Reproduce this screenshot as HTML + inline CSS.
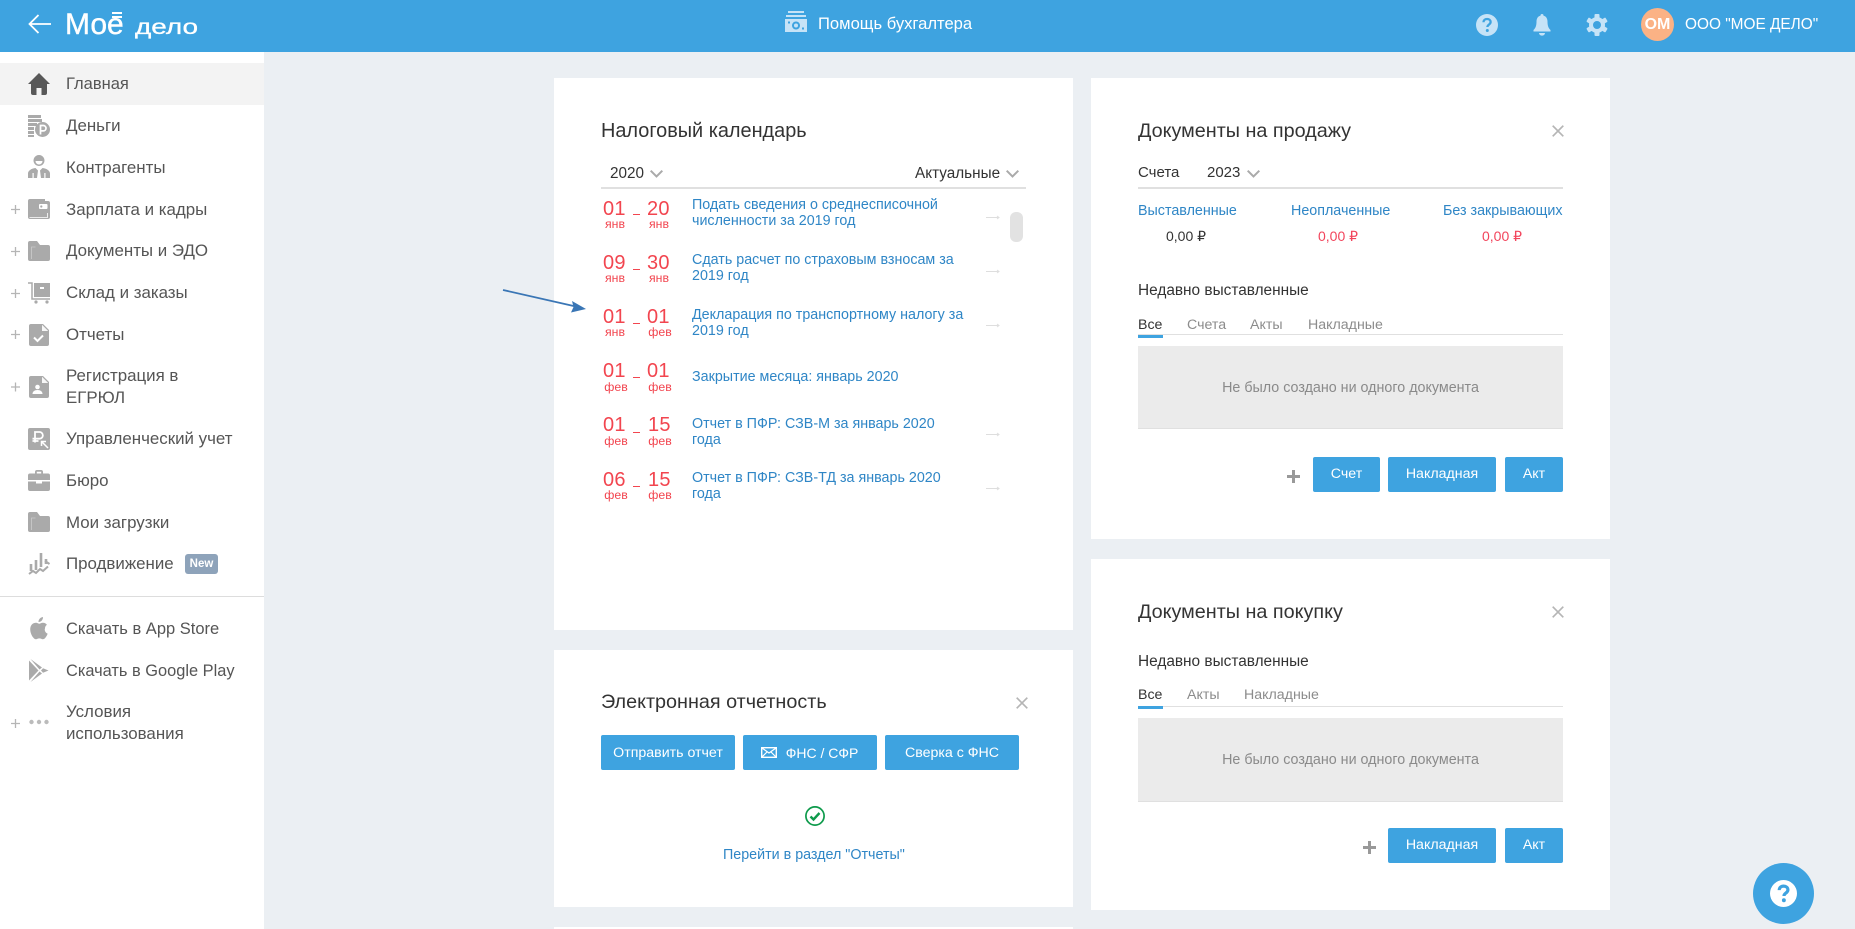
<!DOCTYPE html>
<html lang="ru"><head><meta charset="utf-8"><title>Моё дело</title>
<style>
html,body{margin:0;padding:0;width:1855px;height:929px;overflow:hidden;background:#ebeff3;font-family:"Liberation Sans",Arial,sans-serif}
.a{position:absolute}
.t{position:absolute;white-space:nowrap;line-height:20px;height:20px}
.card{position:absolute;background:#fff}
.nav{font-size:16.900px;color:#555;left:66px}
.h{font-size:19.800px;color:#333}
.d{font-size:20px;color:#f2454f;letter-spacing:.2px}
.m{font-size:12.300px;color:#f2454f;text-align:center;width:26px}
.l{font-size:14.300px;color:#2f86c6;line-height:16px;height:auto}
.btn{position:absolute;background:#3ea3e0;border-radius:2px;height:35px;line-height:35px;color:#fff;font-size:14.200px;text-align:center;white-space:nowrap}
.s14{font-size:15px;color:#333}
.lnk{font-size:14.300px;color:#2f86c6}
.red{font-size:14px;color:#f2455c}
.tab{font-size:14.200px;color:#8c8c8c}
.box{position:absolute;background:#ebebeb;border-bottom:1px solid #e0e0e0;left:1138px;width:425px;color:#8a8a8a;font-size:14.300px;text-align:center}
.line{position:absolute;background:#e0e0e0;height:2px}
.ul{position:absolute;background:#3ea3e0;height:3px;left:1138px;width:25px}
svg{position:absolute;display:block;overflow:visible}
</style></head><body>

<!-- header -->
<div class="a" style="left:0;top:0;width:1855px;height:52px;background:#3ea3e0"></div>
<svg style="left:28px;top:13px" width="23" height="22" viewBox="0 0 23 22" fill="none" stroke="#fff" stroke-width="1.800"><path d="M1.500 11H23M10.500 2L1.500 11l9 9"/></svg>
<div class="t" style="left:65px;top:9px;font-size:30px;line-height:32px;height:32px;color:#fff;-webkit-text-stroke:.4px #fff">Мое</div>
<div class="a" style="left:112px;top:12px;width:10px;height:2px;background:#fff"></div>
<div class="a" style="left:112px;top:16px;width:10px;height:2px;background:#fff"></div>
<div class="t" style="left:135px;top:16px;font-size:21px;line-height:24px;height:24px;color:#fff;-webkit-text-stroke:.3px #fff;transform:scaleX(1.330);transform-origin:left">дело</div>

<svg style="left:785px;top:11px" width="22" height="22" viewBox="0 0 22 22"><rect x="3" y="0" width="16" height="2" fill="#c6e3f7"/><rect x="1" y="4" width="20" height="2" fill="#c6e3f7"/><path fill="#c6e3f7" fill-rule="evenodd" d="M0 8h22v13H0zM11 10.500a4 4 0 1 0 .01 0zM3 10.500h2v2H3zM17 16.500h2v2h-2z"/><circle cx="11" cy="14.500" r="2" fill="#c6e3f7"/></svg>
<div class="t" style="left:818px;top:14px;font-size:16.600px;color:#fff">Помощь бухгалтера</div>

<svg style="left:1476px;top:14px" width="22" height="22" viewBox="0 0 22 22"><circle cx="11" cy="11" r="11" fill="#c6e3f7"/><path d="M7.500 8.300c0-2 1.500-3.300 3.600-3.300s3.500 1.200 3.500 3c0 2.600-3.200 2.600-3.200 5" fill="none" stroke="#3ea3e0" stroke-width="2.300"/><circle cx="11.300" cy="16.500" r="1.500" fill="#3ea3e0"/></svg>
<svg style="left:1533px;top:14px" width="18" height="22" viewBox="0 0 18 22" fill="#c6e3f7"><circle cx="9" cy="1.500" r="1.500"/><path d="M9 1.500c3.800 0 5.500 2.800 5.500 6 0 4 .8 6.500 3 8.500v1.500H.5V16c2.200-2 3-4.500 3-8.500 0-3.200 1.700-6 5.500-6z"/><path d="M6 19h6a3 2.600 0 0 1-6 0z"/></svg>
<svg style="left:1586px;top:14px" width="22" height="22" viewBox="0 0 22 22"><g fill="#c6e3f7"><circle cx="11" cy="11" r="8"/><rect x="8.500" y="0" width="5" height="22" rx="1"/><rect x="8.500" y="0" width="5" height="22" rx="1" transform="rotate(60 11 11)"/><rect x="8.500" y="0" width="5" height="22" rx="1" transform="rotate(120 11 11)"/></g><circle cx="11" cy="11" r="4" fill="#3ea3e0"/></svg>
<div class="a" style="left:1641px;top:8px;width:33px;height:33px;border-radius:50%;background:#fbb285;color:#fff;font-weight:bold;font-size:16px;line-height:33px;text-align:center">ОМ</div>
<div class="t" style="left:1685px;top:15px;font-size:15.400px;color:#fff">ООО "МОЕ ДЕЛО"</div>

<!-- sidebar -->
<div class="a" style="left:0;top:52px;width:264px;height:877px;background:#fff"></div>
<div class="a" style="left:0;top:63px;width:264px;height:42px;background:#f3f3f3"></div>
<div class="t nav" style="top:74px;font-size:16.500px">Главная</div>
<div class="t nav" style="top:116px">Деньги</div>
<div class="t nav" style="top:158px">Контрагенты</div>
<div class="t nav" style="top:200px">Зарплата и кадры</div>
<div class="t nav" style="top:241px">Документы и ЭДО</div>
<div class="t nav" style="top:283px">Склад и заказы</div>
<div class="t nav" style="top:325px">Отчеты</div>
<div class="t nav" style="top:366px">Регистрация в</div>
<div class="t nav" style="top:388px">ЕГРЮЛ</div>
<div class="t nav" style="top:429px">Управленческий учет</div>
<div class="t nav" style="top:471px">Бюро</div>
<div class="t nav" style="top:513px">Мои загрузки</div>
<div class="t nav" style="top:554px">Продвижение</div>
<div class="a" style="left:185px;top:554px;width:33px;height:20px;border-radius:3px;background:#8ea3ba;color:#fff;font-size:11.500px;font-weight:bold;line-height:20px;text-align:center">New</div>
<div class="a" style="left:0;top:596px;width:264px;height:1px;background:#ddd"></div>
<div class="t nav" style="top:619px;font-size:16.500px">Скачать в App Store</div>
<div class="t nav" style="top:661px;font-size:16.400px">Скачать в Google Play</div>
<div class="t nav" style="top:702px">Условия</div>
<div class="t nav" style="top:724px">использования</div>

<!-- plus signs -->
<svg style="left:0;top:0" width="30" height="740" fill="none" stroke="#b5b5b5" stroke-width="1.300">
<path d="M11 209.500h9M15.500 205v9M11 251.500h9M15.500 247v9M11 293.500h9M15.500 289v9M11 334.500h9M15.500 330v9M11 387h9M15.500 382.500v9M11 723.500h9M15.500 719v9"/>
</svg>

<!-- sidebar icons -->
<svg style="left:28px;top:73px" width="22" height="22" viewBox="0 0 22 22" fill="#585858"><path d="M11 0L22 11h-3v9a2 2 0 0 1-2 2h-3.500v-7h-5v7H5a2 2 0 0 1-2-2v-9H0z"/></svg>
<svg style="left:28px;top:115px" width="22" height="22" viewBox="0 0 22 22" fill="#aaa"><rect x="0" y="0" width="13" height="3"/><rect x="0" y="4" width="14" height="3"/><rect x="0" y="8" width="9" height="3"/><rect x="0" y="12" width="6" height="3"/><rect x="0" y="16" width="6" height="3"/><rect x="0" y="20" width="6" height="2"/><circle cx="14.500" cy="14.500" r="7.500"/><path d="M12.500 19.500v-9h2.800a2.600 2.600 0 0 1 0 5.400h-2.800" fill="none" stroke="#fff" stroke-width="1.700"/></svg>
<svg style="left:28px;top:155px" width="22" height="23" viewBox="0 0 22 23" fill="#aaa"><path fill-rule="evenodd" d="M11 0a5.500 5.500 0 1 1-.01 0zM7.500 6a3.500 3.500 0 0 0 7 0z"/><path d="M0 23v-4.500c0-3 3.500-5 7.500-5.500L10 15.500 9 23zM22 23v-4.500c0-3-3.500-5-7.500-5.500L12 15.500 13 23z"/><rect x="4.500" y="18" width="1.200" height="5" fill="#fff"/><rect x="16.300" y="18" width="1.200" height="5" fill="#fff"/></svg>
<svg style="left:28px;top:199px" width="22" height="20" viewBox="0 0 22 20"><path fill="#aaa" d="M2 0h15v2h3a2 2 0 0 1 2 2v14a2 2 0 0 1-2 2H2a2 2 0 0 1-2-2V2a2 2 0 0 1 2-2z"/><rect x="11" y="5" width="8.500" height="5" rx="1" fill="#fff"/><circle cx="13.300" cy="7.500" r="1.100" fill="#aaa"/><path d="M1.500 18.500h18V14" fill="none" stroke="#fff" stroke-width=".8"/></svg>
<svg style="left:28px;top:241px" width="22" height="20" viewBox="0 0 22 20"><path fill="#aaa" d="M2 0h7l3 4h8a2 2 0 0 1 2 2v12a2 2 0 0 1-2 2H2a2 2 0 0 1-2-2V2a2 2 0 0 1 2-2z"/><path d="M3.500 18V6h4" fill="none" stroke="#ccc" stroke-width=".8"/></svg>
<svg style="left:28px;top:282px" width="22" height="22" viewBox="0 0 22 22"><path d="M0 1h4v16h18" fill="none" stroke="#aaa" stroke-width="1.500"/><rect x="6" y="1" width="16" height="14" fill="#aaa"/><rect x="12" y="5" width="4" height="2" fill="#fff"/><circle cx="8" cy="20" r="1.600" fill="#aaa"/><circle cx="19" cy="20" r="1.600" fill="#aaa"/></svg>
<svg style="left:29px;top:324px" width="20" height="22" viewBox="0 0 20 22"><path fill="#aaa" d="M2 0h12l6 6v14a2 2 0 0 1-2 2H2a2 2 0 0 1-2-2V2a2 2 0 0 1 2-2z"/><path fill="#fff" d="M13 0.800v6.200h6.200z" opacity=".9"/><path d="M5 13.500l3.500 3.500L14 11.500" fill="none" stroke="#fff" stroke-width="2"/></svg>
<svg style="left:29px;top:376px" width="20" height="22" viewBox="0 0 20 22"><path fill="#aaa" d="M2 0h12l6 6v14a2 2 0 0 1-2 2H2a2 2 0 0 1-2-2V2a2 2 0 0 1 2-2z"/><path fill="#fff" d="M13 0.800v6.200h6.200z" opacity=".9"/><circle cx="8.500" cy="11" r="2.300" fill="#fff"/><path d="M3.500 18c0-2.500 2-4 5-4s5 1.500 5 4z" fill="#fff"/></svg>
<svg style="left:28px;top:428px" width="22" height="22" viewBox="0 0 22 22"><rect width="22" height="22" rx="2" fill="#aaa"/><path d="M7 14.500V4h4.500a3.300 3.300 0 0 1 0 6.700H4.500M4.500 13h6" fill="none" stroke="#fff" stroke-width="1.800"/><path d="M20 20l-6-6M13.500 18v-4.500H18" fill="none" stroke="#fff" stroke-width="1.500"/></svg>
<svg style="left:28px;top:470px" width="22" height="21" viewBox="0 0 22 21" fill="#aaa"><path d="M7 4V2a2 2 0 0 1 2-2h4a2 2 0 0 1 2 2v2h-1.800V1.800H8.800V4z"/><path d="M2 3.500h18a2 2 0 0 1 2 2V10H0V5.500a2 2 0 0 1 2-2z"/><path d="M0 11.500h8V13.500h6V11.500h8V19a2 2 0 0 1-2 2H2a2 2 0 0 1-2-2z"/></svg>
<svg style="left:28px;top:512px" width="22" height="20" viewBox="0 0 22 20"><path fill="#aaa" d="M2 0h7l3 4h8a2 2 0 0 1 2 2v12a2 2 0 0 1-2 2H2a2 2 0 0 1-2-2V2a2 2 0 0 1 2-2z"/><path d="M3.500 18V6h4" fill="none" stroke="#ccc" stroke-width=".8"/></svg>
<svg style="left:28px;top:553px" width="22" height="22" viewBox="0 0 22 22" fill="none" stroke="#aaa"><path d="M1 21l4-3 3 2 4-4 3 2 5-4.500" stroke-width="2"/><path d="M3 18v-7M8 17V7M13 14V0M18 11V6" stroke-width="2.600"/><path d="M17 8l4.500 3" stroke-width="2"/></svg>
<svg style="left:29px;top:617px" width="20" height="22" viewBox="0 0 20 22" fill="#aaa"><path d="M14 0c.2 2.500-1.800 5-4.500 5C9.300 2.500 11.500.300 14 0z"/><path d="M16.500 11.700c0-2.400 1.800-3.500 2-3.700-1.300-1.800-3.200-2.100-3.900-2.100-1.600-.2-3.200 1-4 1s-2.100-1-3.500-1C4.900 6 3.200 7 2.200 8.700.2 12.200 1.700 17.400 3.600 20.200c1 1.300 2.100 2.800 3.500 2.700 1.400 0 1.900-.9 3.600-.9s2.200.9 3.600.9c1.500 0 2.500-1.300 3.400-2.700 1.100-1.500 1.500-3 1.500-3.100-.1 0-3-1.100-3-4.400z" transform="scale(.97)"/></svg>
<svg style="left:29px;top:659px" width="20" height="23" viewBox="0 0 20 23" fill="#aaa"><path d="M0 1.500L9.500 11.500 0 21.500z"/><path d="M1.500 0L13 8.500 10.500 10.500zM1.500 23L13 14.500 10.500 12.500z"/><path d="M14 9.300l5.500 2.200-5.500 2.200-2-2.200z"/></svg>
<svg style="left:29px;top:719px" width="20" height="6" viewBox="0 0 20 6" fill="#bbb"><circle cx="2.500" cy="3" r="2.200"/><circle cx="10" cy="3" r="2.200"/><circle cx="17.500" cy="3" r="2.200"/></svg>

<!-- cards -->
<div class="card" style="left:554px;top:78px;width:519px;height:552px"></div>
<div class="card" style="left:554px;top:650px;width:519px;height:257px"></div>
<div class="card" style="left:554px;top:927px;width:519px;height:2px"></div>
<div class="card" style="left:1091px;top:78px;width:519px;height:461px"></div>
<div class="card" style="left:1091px;top:559px;width:519px;height:351px"></div>

<!-- calendar -->
<div class="t h" style="left:601px;top:121px;font-size:19.900px">Налоговый календарь</div>
<div class="t s14" style="left:610px;top:164px;font-size:15.300px">2020</div>
<svg style="left:650px;top:170px" width="13" height="8" fill="none" stroke="#aaa" stroke-width="2"><path d="M.7.700l5.800 5.800L12.300.700"/></svg>
<div class="t s14" style="left:915px;top:164px;font-size:15.300px">Актуальные</div>
<svg style="left:1006px;top:170px" width="13" height="8" fill="none" stroke="#aaa" stroke-width="2"><path d="M.7.700l5.800 5.800L12.300.700"/></svg>
<div class="line" style="left:601px;top:187px;width:425px"></div>
<div class="a" style="left:1010px;top:212px;width:13px;height:30px;border-radius:6px;background:#e2e2e2"></div>

<div class="t d" style="left:603px;top:199px">01</div><div class="t d" style="left:647px;top:199px">20</div><div class="t m" style="left:602px;top:214px">янв</div><div class="t m" style="left:646px;top:214px">янв</div>
<div class="t l" style="left:692px;top:197px">Подать сведения о среднесписочной<br>численности за 2019 год</div>

<div class="t d" style="left:603px;top:253px">09</div><div class="t d" style="left:647px;top:253px">30</div><div class="t m" style="left:602px;top:268px">янв</div><div class="t m" style="left:646px;top:268px">янв</div>
<div class="t l" style="left:692px;top:252px">Сдать расчет по страховым взносам за<br>2019 год</div>

<div class="t d" style="left:603px;top:307px">01</div><div class="t d" style="left:647px;top:307px">01</div><div class="t m" style="left:602px;top:322px">янв</div><div class="t m" style="left:647px;top:322px">фев</div>
<div class="t l" style="left:692px;top:307px">Декларация по транспортному налогу за<br>2019 год</div>

<div class="t d" style="left:603px;top:361px">01</div><div class="t d" style="left:647px;top:361px">01</div><div class="t m" style="left:603px;top:377px">фев</div><div class="t m" style="left:647px;top:377px">фев</div>
<div class="t l" style="left:692px;top:369px">Закрытие месяца: январь 2020</div>

<div class="t d" style="left:603px;top:415px">01</div><div class="t d" style="left:648px;top:415px">15</div><div class="t m" style="left:603px;top:431px">фев</div><div class="t m" style="left:647px;top:431px">фев</div>
<div class="t l" style="left:692px;top:416px">Отчет в ПФР: СЗВ-М за январь 2020<br>года</div>

<div class="t d" style="left:603px;top:470px">06</div><div class="t d" style="left:648px;top:470px">15</div><div class="t m" style="left:603px;top:485px">фев</div><div class="t m" style="left:647px;top:485px">фев</div>
<div class="t l" style="left:692px;top:470px">Отчет в ПФР: СЗВ-ТД за январь 2020<br>года</div>

<svg style="left:0;top:0" width="1100" height="520" fill="none">
<path stroke="#f2454f" stroke-width="1" d="M633 214.500h7M633 269.500h7M633 323.500h7M633 377.500h7M633 432.500h7M633 486.500h7"/>
<path stroke="#dedede" stroke-width="1" d="M986 217.500h13M997 216l2 1.500-2 1.500M986 271.500h13M997 270l2 1.500-2 1.500M986 325.500h13M997 324l2 1.500-2 1.500M986 434.500h13M997 433l2 1.500-2 1.500M986 488.500h13M997 487l2 1.500-2 1.500"/>
<path stroke="#3a76b5" stroke-width="1.800" d="M503 290L578 307"/>
<path fill="#3a76b5" d="M586 309l-15 3.500 2.500-5.500-1.500-6z"/>
</svg>

<!-- e-report -->
<div class="t h" style="left:601px;top:692px;font-size:19.800px">Электронная отчетность</div>
<svg style="left:1016px;top:697px" width="12" height="12" stroke="#b5b5b5" stroke-width="1.700"><path d="M.7.700l10.600 10.600M11.300.700L.7 11.300"/></svg>
<div class="btn" style="left:601px;top:735px;width:134px;line-height:36px">Отправить отчет</div>
<div class="btn" style="left:743px;top:735px;width:134px;text-indent:24px;line-height:36px;font-size:14px">ФНС / СФР</div>
<svg style="left:761px;top:747px" width="16" height="11" viewBox="0 0 16 11" fill="none" stroke="#fff"><rect x=".7" y=".7" width="14.600" height="9.600" stroke-width="1.400"/><path d="M1 1l7 5 7-5M1 10l5-5M15 10l-5-5" stroke-width="1.200"/></svg>
<div class="btn" style="left:885px;top:735px;width:134px;line-height:36px">Сверка с ФНС</div>
<svg style="left:805px;top:806px" width="20" height="20" viewBox="0 0 20 20" fill="none" stroke="#0d9a4b" stroke-width="1.700"><circle cx="10" cy="10" r="9.100"/><path d="M5.500 10.500l3 3 6-6.500" stroke-width="2.400"/></svg>
<div class="t lnk" style="left:723px;top:845px">Перейти в раздел "Отчеты"</div>

<!-- docs sale -->
<div class="t h" style="left:1138px;top:121px">Документы на продажу</div>
<svg style="left:1552px;top:125px" width="12" height="12" stroke="#b5b5b5" stroke-width="1.700"><path d="M.7.700l10.600 10.600M11.300.700L.7 11.300"/></svg>
<div class="t s14" style="left:1138px;top:163px">Счета</div>
<div class="t s14" style="left:1207px;top:163px">2023</div>
<svg style="left:1247px;top:170px" width="13" height="8" fill="none" stroke="#aaa" stroke-width="2"><path d="M.7.700l5.800 5.800L12.300.700"/></svg>
<div class="line" style="left:1138px;top:187px;width:425px"></div>
<div class="t lnk" style="left:1138px;top:201px">Выставленные</div>
<div class="t lnk" style="left:1291px;top:201px">Неоплаченные</div>
<div class="t lnk" style="left:1443px;top:201px">Без закрывающих</div>
<div class="t s14" style="left:1166px;top:226px;font-size:14px">0,00 ₽</div>
<div class="t red" style="left:1318px;top:226px">0,00 ₽</div>
<div class="t red" style="left:1482px;top:226px">0,00 ₽</div>
<div class="t s14" style="left:1138px;top:281px;font-size:15.400px">Недавно выставленные</div>
<div class="t tab" style="left:1138px;top:315px;color:#333">Все</div>
<div class="t tab" style="left:1187px;top:315px">Счета</div>
<div class="t tab" style="left:1250px;top:315px">Акты</div>
<div class="t tab" style="left:1308px;top:315px">Накладные</div>
<div class="line" style="left:1138px;top:334px;width:425px;height:1px"></div>
<div class="ul" style="top:335px"></div>
<div class="box" style="top:346px;height:82px;line-height:84px">Не было создано ни одного документа</div>
<svg style="left:1287px;top:470px" width="13" height="13" fill="#999"><rect y="5" width="13" height="3"/><rect x="5" width="3" height="13"/></svg>
<div class="btn" style="left:1313px;top:457px;width:67px">Счет</div>
<div class="btn" style="left:1388px;top:457px;width:108px">Накладная</div>
<div class="btn" style="left:1505px;top:457px;width:58px">Акт</div>

<!-- docs purchase -->
<div class="t h" style="left:1138px;top:602px">Документы на покупку</div>
<svg style="left:1552px;top:606px" width="12" height="12" stroke="#b5b5b5" stroke-width="1.700"><path d="M.7.700l10.600 10.600M11.300.700L.7 11.300"/></svg>
<div class="t s14" style="left:1138px;top:652px;font-size:15.400px">Недавно выставленные</div>
<div class="t tab" style="left:1138px;top:685px;color:#333">Все</div>
<div class="t tab" style="left:1187px;top:685px">Акты</div>
<div class="t tab" style="left:1244px;top:685px">Накладные</div>
<div class="line" style="left:1138px;top:706px;width:425px;height:1px"></div>
<div class="ul" style="top:706px"></div>
<div class="box" style="top:718px;height:83px;line-height:84px">Не было создано ни одного документа</div>
<svg style="left:1363px;top:841px" width="13" height="13" fill="#999"><rect y="5" width="13" height="3"/><rect x="5" width="3" height="13"/></svg>
<div class="btn" style="left:1388px;top:828px;width:108px">Накладная</div>
<div class="btn" style="left:1505px;top:828px;width:58px">Акт</div>

<!-- fab -->
<div class="a" style="left:1753px;top:863px;width:61px;height:61px;border-radius:50%;background:#3ea3e0"></div>
<svg style="left:1770px;top:880px" width="27" height="27" viewBox="0 0 22 22"><circle cx="11" cy="11" r="11" fill="#fff"/><path d="M7.500 8.300c0-2 1.500-3.300 3.600-3.300s3.500 1.200 3.500 3c0 2.600-3.200 2.600-3.200 5" fill="none" stroke="#3ea3e0" stroke-width="2.600"/><circle cx="11.300" cy="16.500" r="1.600" fill="#3ea3e0"/></svg>
</body></html>
